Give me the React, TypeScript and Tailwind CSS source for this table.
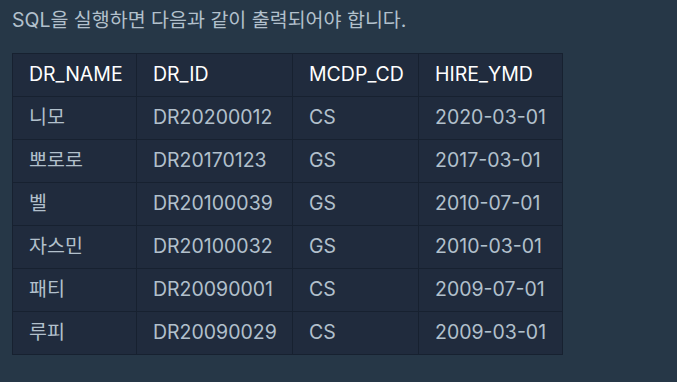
const columns = [
  { key: 'name', label: 'DR_NAME', width: 'w-[124px]' },
  { key: 'id', label: 'DR_ID', width: 'w-[156px]' },
  { key: 'cd', label: 'MCDP_CD', width: 'w-[126px]' },
  { key: 'ymd', label: 'HIRE_YMD', width: 'w-[144px]' },
] as const

const rows = [
  { name: '니모', id: 'DR20200012', cd: 'CS', ymd: '2020-03-01' },
  { name: '뽀로로', id: 'DR20170123', cd: 'GS', ymd: '2017-03-01' },
  { name: '벨', id: 'DR20100039', cd: 'GS', ymd: '2010-07-01' },
  { name: '자스민', id: 'DR20100032', cd: 'GS', ymd: '2010-03-01' },
  { name: '패티', id: 'DR20090001', cd: 'CS', ymd: '2009-07-01' },
  { name: '루피', id: 'DR20090029', cd: 'CS', ymd: '2009-03-01' },
]

export default function App() {
  return (
    <div
      className="min-h-screen w-full bg-[#263747] px-3 pt-[6px]"
      style={{ fontFamily: 'Inter, "Noto Sans CJK KR", sans-serif' }}
    >
      <p className="text-[19.5px] leading-[28px] text-[#b2c0cc]">
        SQL을 실행하면 다음과 같이 출력되어야 합니다.
      </p>

      {/* Result table */}
      <table className="mt-[19px] border-collapse bg-[#202b3d] text-[19.5px] table-fixed">
        <thead>
          <tr>
            {columns.map((col) => (
              <th
                key={col.key}
                className={`${col.width} h-[43px] border border-[#172130] pl-4 text-left font-normal text-white`}
              >
                {col.label}
              </th>
            ))}
          </tr>
        </thead>
        <tbody>
          {rows.map((row) => (
            <tr key={row.id}>
              {columns.map((col) => (
                <td
                  key={col.key}
                  className="h-[43px] border border-[#172130] pl-4 text-[#b2c0cc]"
                >
                  {row[col.key]}
                </td>
              ))}
            </tr>
          ))}
        </tbody>
      </table>
    </div>
  )
}
